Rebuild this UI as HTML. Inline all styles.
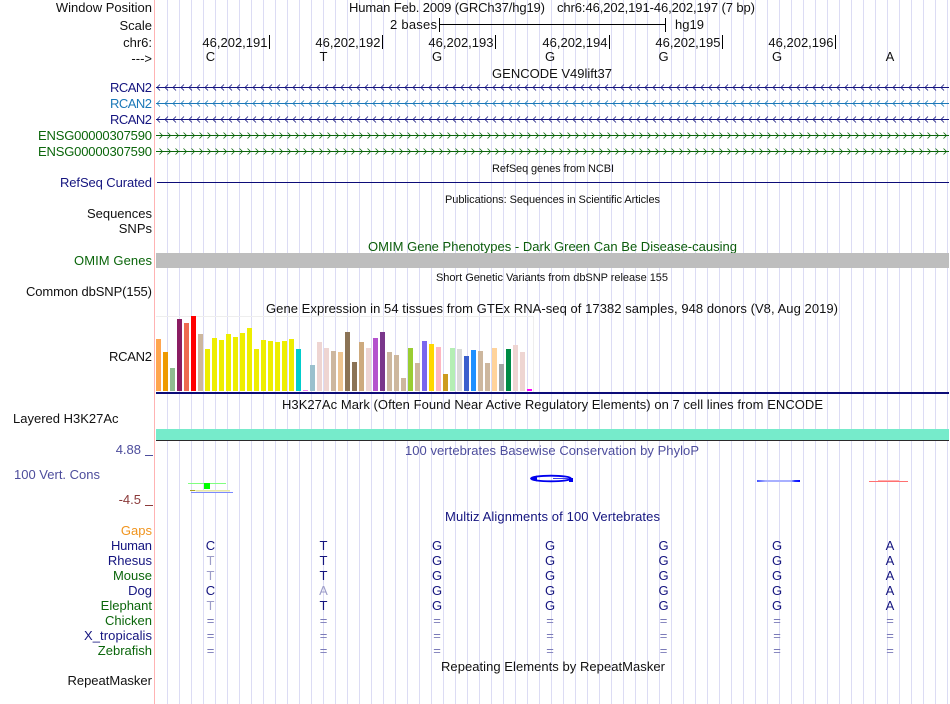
<!DOCTYPE html>
<html><head><meta charset="utf-8"><title>Genome Browser</title>
<style>
html,body{margin:0;padding:0;background:#fff;width:950px;height:704px;overflow:hidden}
svg{display:block}
text{font-family:"Liberation Sans",sans-serif;font-size:13px;fill:#111}
.l text,text.r{text-anchor:end}
.c text,text.m{text-anchor:middle}
.s{font-size:11px}
.n{fill:#14147f}.g{fill:#0b660b}.f{fill:#9c9cc8}.e{fill:#7a7ab8}.p{fill:#4d4d9c}
</style></head><body>
<svg width="950" height="704" viewBox="0 0 950 704" xmlns="http://www.w3.org/2000/svg">
<defs>
<pattern id="grid" x="167" y="0" width="12" height="704" patternUnits="userSpaceOnUse"><rect x="0" y="0" width="1" height="704" fill="#dcdcf4"/></pattern>
<pattern id="la" x="156" y="84" width="8" height="7" patternUnits="userSpaceOnUse"><path d="M4 0.5L1 3.5L4 6.5" fill="none" stroke="#14147f" stroke-width="0.8"/></pattern>
<pattern id="lb" x="156" y="100" width="8" height="7" patternUnits="userSpaceOnUse"><path d="M4 0.5L1 3.5L4 6.5" fill="none" stroke="#1a78b8" stroke-width="0.8"/></pattern>
<pattern id="lc" x="156" y="116" width="8" height="7" patternUnits="userSpaceOnUse"><path d="M4 0.5L1 3.5L4 6.5" fill="none" stroke="#14147f" stroke-width="0.8"/></pattern>
<pattern id="ra" x="156" y="132" width="8" height="7" patternUnits="userSpaceOnUse"><path d="M3.5 0.5L6.5 3.5L3.5 6.5" fill="none" stroke="#0b660b" stroke-width="0.8"/></pattern>
<pattern id="rb" x="156" y="148" width="8" height="7" patternUnits="userSpaceOnUse"><path d="M3.5 0.5L6.5 3.5L3.5 6.5" fill="none" stroke="#0b660b" stroke-width="0.8"/></pattern>
<linearGradient id="bl" x1="0" x2="1" y1="0" y2="0"><stop offset="0" stop-color="#4050ff"/><stop offset="0.2" stop-color="#a8b0ff"/><stop offset="0.8" stop-color="#a8b0ff"/><stop offset="0.88" stop-color="#2030ff"/><stop offset="1" stop-color="#0000ff"/></linearGradient>
</defs>
<rect x="167" y="0" width="783" height="704" fill="url(#grid)"/>
<rect x="154" y="0" width="1" height="704" fill="#ffb3b3"/>

<g class="l">
<text x="152" y="12">Window Position</text>
<text x="152" y="30">Scale</text>
<text x="152" y="47">chr6:</text>
<text x="152" y="63">---&gt;</text>
<text x="152" y="92" class="n" textLength="42">RCAN2</text>
<text x="152" y="108" style="fill:#1a78b8" textLength="42">RCAN2</text>
<text x="152" y="124" class="n" textLength="42">RCAN2</text>
<text x="152" y="140" class="g" textLength="114">ENSG00000307590</text>
<text x="152" y="156" class="g" textLength="114">ENSG00000307590</text>
<text x="152" y="187" class="n" textLength="92">RefSeq Curated</text>
<text x="152" y="218">Sequences</text>
<text x="152" y="233">SNPs</text>
<text x="152" y="265" class="g" textLength="78">OMIM Genes</text>
<text x="152" y="296" textLength="126">Common dbSNP(155)</text>
<text x="152" y="361" textLength="43">RCAN2</text>
<text x="141" y="454" class="p">4.88</text>
<text x="141" y="504" style="fill:#8b3a3a">-4.5</text>
<text x="152" y="535" style="fill:#f0941e">Gaps</text>
<text x="152" y="550" class="n" textLength="41">Human</text>
<text x="152" y="565" class="n">Rhesus</text>
<text x="152" y="580" class="g">Mouse</text>
<text x="152" y="595" class="n">Dog</text>
<text x="152" y="610" class="g">Elephant</text>
<text x="152" y="625" class="g">Chicken</text>
<text x="152" y="640" class="n" textLength="68">X_tropicalis</text>
<text x="152" y="655" class="g">Zebrafish</text>
<text x="152" y="685">RepeatMasker</text>
</g>
<text x="13" y="423">Layered H3K27Ac</text>
<text x="14" y="479" class="p">100 Vert. Cons</text>
<rect x="145" y="455" width="8" height="1" fill="#4d4d9c"/>
<rect x="145" y="505" width="8" height="1" fill="#8b3a3a"/>

<text x="349" y="12" textLength="196">Human Feb. 2009 (GRCh37/hg19)</text>
<text x="557" y="12" textLength="198">chr6:46,202,191-46,202,197 (7 bp)</text>
<text x="437" y="29" class="r" textLength="47">2 bases</text>
<text x="675" y="29">hg19</text>
<rect x="439" y="18" width="1" height="14" fill="#000"/>
<rect x="665" y="18" width="1" height="14" fill="#000"/>
<rect x="439" y="24" width="227" height="1" fill="#000"/>

<g class="l">
<text x="267.5" y="47">46,202,191</text>
<text x="380.5" y="47">46,202,192</text>
<text x="493.5" y="47">46,202,193</text>
<text x="607.5" y="47">46,202,194</text>
<text x="720.5" y="47">46,202,195</text>
<text x="833.5" y="47">46,202,196</text>
</g>
<g fill="#000">
<rect x="269" y="35" width="1" height="14"/><rect x="382" y="35" width="1" height="14"/><rect x="495" y="35" width="1" height="14"/>
<rect x="609" y="35" width="1" height="14"/><rect x="722" y="35" width="1" height="14"/><rect x="835" y="35" width="1" height="14"/>
</g>
<g class="c">
<text x="210.5" y="61">C</text><text x="323.5" y="61">T</text><text x="437" y="61">G</text><text x="550" y="61">G</text><text x="663.5" y="61">G</text><text x="777" y="61">G</text><text x="890" y="61">A</text>
<text x="552" y="78">GENCODE V49lift37</text>
<text x="553" y="172" class="s" textLength="122">RefSeq genes from NCBI</text>
<text x="552.5" y="203" class="s" textLength="215">Publications: Sequences in Scientific Articles</text>
<text x="552" y="281" class="s" textLength="232">Short Genetic Variants from dbSNP release 155</text>
<text x="552.5" y="251" style="fill:#0b5c0b" textLength="369">OMIM Gene Phenotypes - Dark Green Can Be Disease-causing</text>
<text x="552" y="313" textLength="572">Gene Expression in 54 tissues from GTEx RNA-seq of 17382 samples, 948 donors (V8, Aug 2019)</text>
<text x="552.5" y="409" textLength="541">H3K27Ac Mark (Often Found Near Active Regulatory Elements) on 7 cell lines from ENCODE</text>
<text x="552" y="455" class="p" textLength="294">100 vertebrates Basewise Conservation by PhyloP</text>
<text x="552.5" y="521" class="n" textLength="215">Multiz Alignments of 100 Vertebrates</text>
<text x="553" y="671" textLength="224">Repeating Elements by RepeatMasker</text>
</g>

<rect x="156" y="87" width="793" height="1" fill="#14147f"/><rect x="156" y="84" width="793" height="7" fill="url(#la)"/>
<rect x="156" y="103" width="793" height="1" fill="#1a78b8"/><rect x="156" y="100" width="793" height="7" fill="url(#lb)"/>
<rect x="156" y="119" width="793" height="1" fill="#14147f"/><rect x="156" y="116" width="793" height="7" fill="url(#lc)"/>
<rect x="156" y="135" width="793" height="1" fill="#0b660b"/><rect x="156" y="132" width="793" height="7" fill="url(#ra)"/>
<rect x="156" y="151" width="793" height="1" fill="#0b660b"/><rect x="156" y="148" width="793" height="7" fill="url(#rb)"/>

<rect x="157" y="182" width="792" height="1" fill="#0c0c78"/>
<rect x="156" y="253" width="793" height="15" fill="#bebebe"/>

<rect x="156" y="316" width="377" height="1" fill="#eeeeee"/>
<rect x="533" y="316" width="1" height="76" fill="#eeeeee"/>
<g>
<rect x="156" y="339" width="5" height="52" fill="#FFA54F"/>
<rect x="163" y="352" width="5" height="39" fill="#EE9A00"/>
<rect x="170" y="368" width="5" height="23" fill="#8FBC8F"/>
<rect x="177" y="319" width="5" height="72" fill="#8B1C62"/>
<rect x="184" y="323" width="5" height="68" fill="#EE6A50"/>
<rect x="191" y="316" width="5" height="75" fill="#FF0000"/>
<rect x="198" y="334" width="5" height="57" fill="#CDB79E"/>
<rect x="205" y="349" width="5" height="42" fill="#EEEE00"/>
<rect x="212" y="338" width="5" height="53" fill="#EEEE00"/>
<rect x="219" y="340" width="5" height="51" fill="#EEEE00"/>
<rect x="226" y="334" width="5" height="57" fill="#EEEE00"/>
<rect x="233" y="337" width="5" height="54" fill="#EEEE00"/>
<rect x="240" y="333" width="5" height="58" fill="#EEEE00"/>
<rect x="247" y="328" width="5" height="63" fill="#EEEE00"/>
<rect x="254" y="349" width="5" height="42" fill="#EEEE00"/>
<rect x="261" y="340" width="5" height="51" fill="#EEEE00"/>
<rect x="268" y="341" width="5" height="50" fill="#EEEE00"/>
<rect x="275" y="342" width="5" height="49" fill="#EEEE00"/>
<rect x="282" y="341" width="5" height="50" fill="#EEEE00"/>
<rect x="289" y="339" width="5" height="52" fill="#EEEE00"/>
<rect x="296" y="349" width="5" height="42" fill="#00CDCD"/>
<rect x="303" y="390" width="5" height="1" fill="#EE82EE"/>
<rect x="310" y="365" width="5" height="26" fill="#9AC0CD"/>
<rect x="317" y="342" width="5" height="49" fill="#EED5D2"/>
<rect x="324" y="348" width="5" height="43" fill="#EED5D2"/>
<rect x="331" y="351" width="5" height="40" fill="#CDB79E"/>
<rect x="338" y="352" width="5" height="39" fill="#EEC591"/>
<rect x="345" y="332" width="5" height="59" fill="#8B7355"/>
<rect x="352" y="362" width="5" height="29" fill="#8B7355"/>
<rect x="359" y="342" width="5" height="49" fill="#CDAA7D"/>
<rect x="366" y="348" width="5" height="43" fill="#EED5D2"/>
<rect x="373" y="338" width="5" height="53" fill="#B452CD"/>
<rect x="380" y="332" width="5" height="59" fill="#7A378B"/>
<rect x="387" y="352" width="5" height="39" fill="#CDB79E"/>
<rect x="394" y="355" width="5" height="36" fill="#CDB79E"/>
<rect x="401" y="378" width="5" height="13" fill="#CDB79E"/>
<rect x="408" y="348" width="5" height="43" fill="#9ACD32"/>
<rect x="415" y="363" width="5" height="28" fill="#CDB79E"/>
<rect x="422" y="341" width="5" height="50" fill="#7A67EE"/>
<rect x="429" y="344" width="5" height="47" fill="#FFD700"/>
<rect x="436" y="347" width="5" height="44" fill="#FFB6C1"/>
<rect x="443" y="374" width="5" height="17" fill="#CD9B1D"/>
<rect x="450" y="348" width="5" height="43" fill="#B4EEB4"/>
<rect x="457" y="349" width="5" height="42" fill="#D9D9D9"/>
<rect x="464" y="356" width="5" height="35" fill="#3A5FCD"/>
<rect x="471" y="350" width="5" height="41" fill="#1E90FF"/>
<rect x="478" y="351" width="5" height="40" fill="#CDB79E"/>
<rect x="485" y="363" width="5" height="28" fill="#CDB79E"/>
<rect x="492" y="348" width="5" height="43" fill="#FFD39B"/>
<rect x="499" y="364" width="5" height="27" fill="#A6A6A6"/>
<rect x="506" y="349" width="5" height="42" fill="#008B45"/>
<rect x="513" y="345" width="5" height="46" fill="#EED5D2"/>
<rect x="520" y="352" width="5" height="39" fill="#EED5D2"/>
<rect x="527" y="389" width="5" height="2" fill="#FF00FF"/>
</g>
<rect x="156" y="392" width="793" height="2" fill="#0c0c78"/>

<rect x="156" y="429" width="793" height="11" fill="#76EBCB"/>
<rect x="156" y="440" width="793" height="1" fill="#2a2a2a"/>

<rect x="188" y="483" width="38" height="1" fill="#80ff80"/>
<rect x="204" y="483" width="6" height="6" fill="#00ff00"/>
<rect x="190" y="490" width="7" height="1" fill="#a8a020"/>
<rect x="195" y="490" width="35" height="1" fill="#e8e8a8"/>
<rect x="196" y="491" width="34" height="1" fill="#f0f0d0"/>
<rect x="191" y="492" width="42" height="1" fill="#7a88ff"/>

<ellipse cx="551" cy="478.5" rx="20" ry="2.8" fill="none" stroke="#0000ee" stroke-width="1.8"/>
<path d="M530 478.5L537 475.5V481.5Z" fill="#0000ee"/>
<rect x="553" y="478" width="17" height="1" fill="#4040ee"/>
<rect x="569" y="478" width="4" height="4" fill="#0000ee"/>

<rect x="757" y="480" width="43" height="2" fill="url(#bl)"/>
<rect x="869" y="481" width="39" height="1" fill="#ff7070"/>
<rect x="878" y="480" width="21" height="1" fill="#ffb0b0"/>

<g class="c">
<text x="210.5" y="550" class="n">C</text><text x="323.5" y="550" class="n">T</text><text x="437" y="550" class="n">G</text><text x="550" y="550" class="n">G</text><text x="663.5" y="550" class="n">G</text><text x="777" y="550" class="n">G</text><text x="890" y="550" class="n">A</text>
<text x="210.5" y="565" class="f">T</text><text x="323.5" y="565" class="n">T</text><text x="437" y="565" class="n">G</text><text x="550" y="565" class="n">G</text><text x="663.5" y="565" class="n">G</text><text x="777" y="565" class="n">G</text><text x="890" y="565" class="n">A</text>
<text x="210.5" y="580" class="f">T</text><text x="323.5" y="580" class="n">T</text><text x="437" y="580" class="n">G</text><text x="550" y="580" class="n">G</text><text x="663.5" y="580" class="n">G</text><text x="777" y="580" class="n">G</text><text x="890" y="580" class="n">A</text>
<text x="210.5" y="595" class="n">C</text><text x="323.5" y="595" class="f">A</text><text x="437" y="595" class="n">G</text><text x="550" y="595" class="n">G</text><text x="663.5" y="595" class="n">G</text><text x="777" y="595" class="n">G</text><text x="890" y="595" class="n">A</text>
<text x="210.5" y="610" class="f">T</text><text x="323.5" y="610" class="n">T</text><text x="437" y="610" class="n">G</text><text x="550" y="610" class="n">G</text><text x="663.5" y="610" class="n">G</text><text x="777" y="610" class="n">G</text><text x="890" y="610" class="n">A</text>
<text x="210.5" y="625" class="e">=</text><text x="323.5" y="625" class="e">=</text><text x="437" y="625" class="e">=</text><text x="550" y="625" class="e">=</text><text x="663.5" y="625" class="e">=</text><text x="777" y="625" class="e">=</text><text x="890" y="625" class="e">=</text>
<text x="210.5" y="640" class="e">=</text><text x="323.5" y="640" class="e">=</text><text x="437" y="640" class="e">=</text><text x="550" y="640" class="e">=</text><text x="663.5" y="640" class="e">=</text><text x="777" y="640" class="e">=</text><text x="890" y="640" class="e">=</text>
<text x="210.5" y="655" class="e">=</text><text x="323.5" y="655" class="e">=</text><text x="437" y="655" class="e">=</text><text x="550" y="655" class="e">=</text><text x="663.5" y="655" class="e">=</text><text x="777" y="655" class="e">=</text><text x="890" y="655" class="e">=</text>
</g>
</svg>
</body></html>
